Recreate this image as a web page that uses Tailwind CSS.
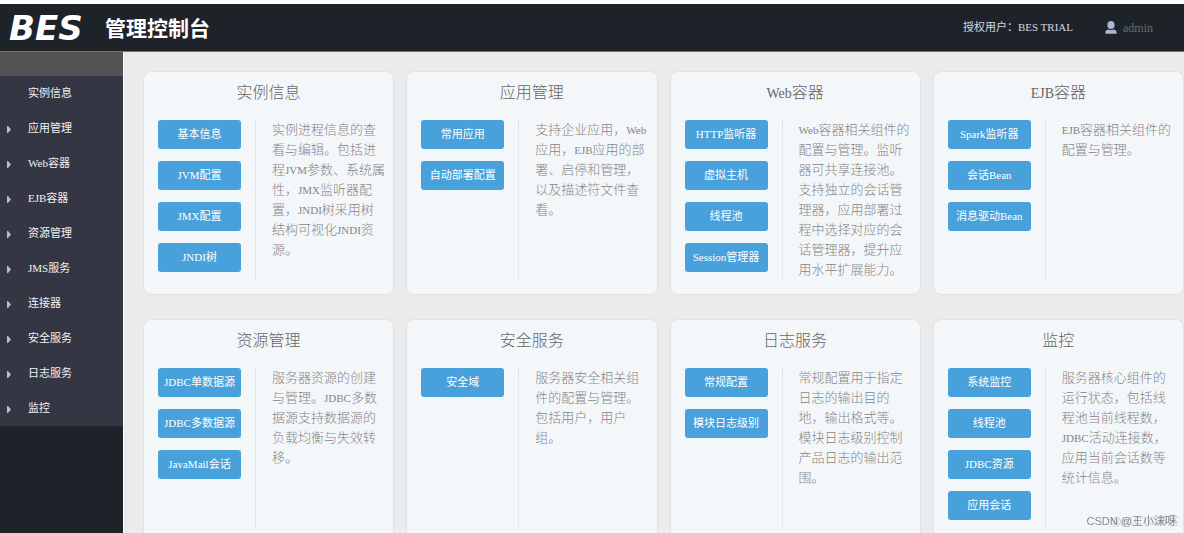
<!DOCTYPE html>
<html lang="zh-CN">
<head>
<meta charset="utf-8">
<title>BES 管理控制台</title>
<script src="https://cdn.jsdelivr.net/npm/@tailwindcss/browser@4"></script>
</head>
<body class="h-screen overflow-hidden flex flex-col bg-[#ebebeb] font-['Liberation_Serif','Noto_Sans_CJK_SC',serif] text-[11px]">
<header class="shrink-0 h-[52px] border-t-4 border-b border-t-white border-b-[#6d7075] bg-[#1e2229] flex items-center pl-[9px] pr-[31px] text-white">
  <h1 class="flex items-center font-bold">
    <span class="w-[96px] font-['DejaVu_Sans',sans-serif] italic text-[34px] leading-8">BES</span>
    <span class="text-[21px] leading-8 pb-[2px] font-['Noto_Sans_CJK_SC',sans-serif]">管理控制台</span>
  </h1>
  <p class="ml-auto text-[#d3d9e2]">授权用户：BES TRIAL</p>
  <a href="#" class="ml-8 flex items-center gap-[6px] text-[12px] text-[#696c70]">
    <svg class="w-3 h-[13px]" viewBox="0 0 12 13" fill="#a9b9cf" aria-hidden="true"><ellipse cx="6" cy="4" rx="3.6" ry="4"/><path d="M4 8.5C1.500 8.800.3 9.700.3 11.500c0 .9.500 1.300 1.400 1.300h8.600c.9 0 1.400-.4 1.400-1.300 0-1.800-1.200-2.700-3.700-3-1.200.7-2.800.7-4 0z"/></svg>
    admin
  </a>
</header>
<div class="flex-1 min-h-0 flex">
  <aside class="w-[124px] shrink-0 bg-[#1e2229] border-r border-white">
    <div class="h-6 bg-[#525252]"></div>
    <nav id="menu" class="bg-[#343743] text-[#f0f1f3]"></nav>
  </aside>
  <main id="cards" class="flex-1 min-w-0 grid grid-cols-4 content-start gap-x-3 gap-y-6 pl-[19px] pt-[19px]"></main>
</div>
<p class="fixed right-2 bottom-0 font-['Liberation_Sans','Noto_Sans_CJK_SC',sans-serif] text-[11px] leading-6 text-[#888]"><span class="absolute right-[-3px] bottom-0 text-[#c9cccf] whitespace-nowrap">@51CTO博客</span><span class="relative">CSDN @王小沫呀</span></p>
<script>
const latin = (s, cls) => s.replace(/[A-Za-z]+/g, m => `<span class="${cls}">${m}</span>`);
const items = ['实例信息','应用管理','Web容器','EJB容器','资源管理','JMS服务','连接器','安全服务','日志服务','监控'];
document.getElementById('menu').innerHTML = items.map((t, i) => `
  <a href="#" class="flex items-center h-[35px] pl-[7px]">
    <span class="w-[21px] pt-[2px]">${i ? '<svg class="w-1 h-[7px]" viewBox="0 0 4 7" fill="#b3bfd0" aria-hidden="true"><path d="M0 0h1l3 3.500-3 3.500H0z"/></svg>' : ''}</span>
    <span>${t}</span>
  </a>`).join('');
const cards = [
  ['实例信息',['基本信息','JVM配置','JMX配置','JNDI树'],'实例进程信息的查看与编辑。包括进程JVM参数、系统属性，JMX监听器配置，JNDI树采用树结构可视化JNDI资源。'],
  ['应用管理',['常用应用','自动部署配置'],'支持企业应用，Web应用，EJB应用的部署、启停和管理，以及描述符文件查看。'],
  ['Web容器',['HTTP监听器','虚拟主机','线程池','Session管理器'],'Web容器相关组件的配置与管理。监听器可共享连接池。支持独立的会话管理器，应用部署过程中选择对应的会话管理器，提升应用水平扩展能力。'],
  ['EJB容器',['Spark监听器','会话Bean','消息驱动Bean'],'EJB容器相关组件的配置与管理。'],
  ['资源管理',['JDBC单数据源','JDBC多数据源','JavaMail会话'],'服务器资源的创建与管理。JDBC多数据源支持数据源的负载均衡与失效转移。'],
  ['安全服务',['安全域'],'服务器安全相关组件的配置与管理。包括用户，用户组。'],
  ['日志服务',['常规配置','模块日志级别'],'常规配置用于指定日志的输出目的地，输出格式等。模块日志级别控制产品日志的输出范围。'],
  ['监控',['系统监控','线程池','JDBC资源','应用会话'],'服务器核心组件的运行状态，包括线程池当前线程数，JDBC活动连接数，应用当前会话数等统计信息。']
];
document.getElementById('cards').innerHTML = cards.map(([title, buttons, text]) => `
  <section class="rounded-lg border border-[#dfe2e4] bg-[#f4f7fa] pt-[9px] pb-3">
    <h2 class="text-center text-[16px] leading-6 font-light text-[#666]">${latin(title, 'text-[14px] leading-none')}</h2>
    <div class="mt-[15px] min-h-[162px] flex pl-[14px]">
      <div class="w-[98px] shrink-0 pr-[14px] flex flex-col gap-3 border-r border-dotted border-[#d5d9dc]">
        ${buttons.map(b => `<button type="button" class="h-[29px] rounded-[3px] bg-[#48a1da] text-white whitespace-nowrap">${b}</button>`).join('')}
      </div>
      <p class="flex-1 min-w-0 pl-4 pr-2 text-[13px] leading-5 font-light text-[#858585]">${latin(text, 'text-[11px] leading-none')}</p>
    </div>
  </section>`).join('');
</script>
</body>
</html>
